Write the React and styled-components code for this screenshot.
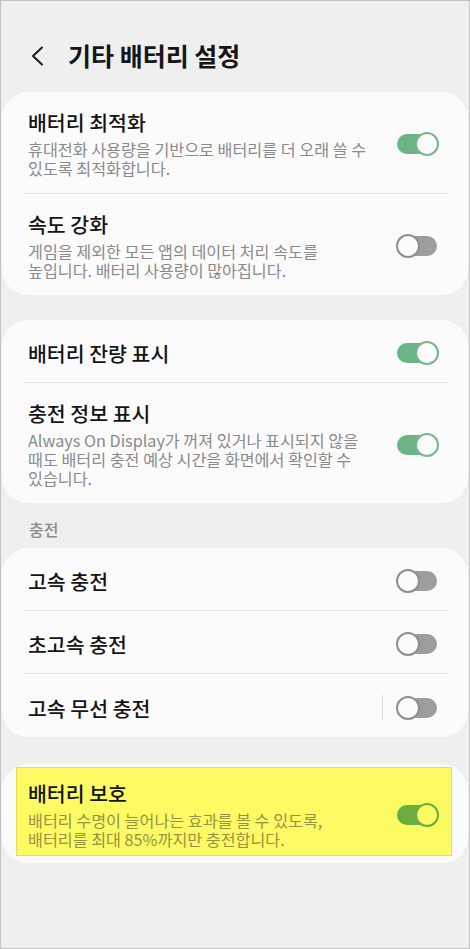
import React from "react";
import styled, { createGlobalStyle, css } from "styled-components";

const GlobalStyle = createGlobalStyle`
  html, body {
    margin: 0;
    padding: 0;
    background: #efefef;
  }
  * {
    box-sizing: border-box;
  }
`;

const sections = [
  {
    rows: [
      {
        title: "배터리 최적화",
        lines: ["휴대전화 사용량을 기반으로 배터리를 더 오래 쓸 수", "있도록 최적화합니다."],
        on: true,
      },
      {
        title: "속도 강화",
        lines: ["게임을 제외한 모든 앱의 데이터 처리 속도를", "높입니다. 배터리 사용량이 많아집니다."],
        on: false,
      },
    ],
  },
  {
    rows: [
      { title: "배터리 잔량 표시", on: true },
      {
        title: "충전 정보 표시",
        lines: [
          "Always On Display가 꺼져 있거나 표시되지 않을",
          "때도 배터리 충전 예상 시간을 화면에서 확인할 수",
          "있습니다.",
        ],
        on: true,
      },
    ],
  },
  {
    label: "충전",
    rows: [
      { title: "고속 충전", on: false },
      { title: "초고속 충전", on: false },
      { title: "고속 무선 충전", on: false, separator: true },
    ],
  },
];

const App = () => {
  return (
    <Page>
      <GlobalStyle />
      <Header>
        <BackButton>
          <svg width="15" height="20" viewBox="0 0 15 20" fill="none">
            <path d="M12 1.5 L3 10 L12 18.5" stroke="#1a1a1a" strokeWidth="2" strokeLinecap="round" strokeLinejoin="round" />
          </svg>
        </BackButton>
        <Title>기타 배터리 설정</Title>
      </Header>

      {sections.map((section, i) => (
        <React.Fragment key={i}>
          {section.label && <SectionLabel>{section.label}</SectionLabel>}
          <Card>
            {section.rows.map((row, j) => (
              <React.Fragment key={row.title}>
                {j > 0 && <Divider />}
                <SettingRow item={row} />
              </React.Fragment>
            ))}
          </Card>
        </React.Fragment>
      ))}

      <Card $spaced>
        <Highlight>
          <SettingRow
            highlight
            item={{
              title: "배터리 보호",
              lines: ["배터리 수명이 늘어나는 효과를 볼 수 있도록,", "배터리를 최대 85%까지만 충전합니다."],
              on: true,
            }}
          />
        </Highlight>
      </Card>
    </Page>
  );
};

const SettingRow = ({ item, highlight }) => {
  const { title, lines, on, separator } = item;
  return (
    <Row $sub={!!lines} $highlight={highlight}>
      <TextBlock>
        <RowTitle>{title}</RowTitle>
        {lines && (
          <RowSub $highlight={highlight}>
            {lines.map((line) => (
              <span key={line}>{line}</span>
            ))}
          </RowSub>
        )}
      </TextBlock>
      <Controls>
        {separator && <VSep />}
        <Switch $on={on} $highlight={highlight}>
          <Track />
          <Thumb />
        </Switch>
      </Controls>
    </Row>
  );
};

export default App;

const Page = styled.div`
  width: 470px;
  min-height: 949px;
  border: 1px solid #c2c2c2;
  background: #efefef;
  font-family: "Noto Sans CJK KR", "Noto Sans", sans-serif;
  padding: 0 1px 40px;
`;

const Header = styled.header`
  display: flex;
  align-items: flex-start;
  height: 91px;
  padding: 39px 0 0 28px;
  gap: 23px;
`;

const BackButton = styled.span`
  display: flex;
  align-items: center;
  width: 15px;
  height: 30px;
  padding-top: 2px;
`;

const Title = styled.h1`
  margin: 0;
  font-size: 25px;
  line-height: 30px;
  font-weight: 700;
  color: #161616;
`;

const Card = styled.section`
  background: #fbfbfb;
  border-radius: 26px;
  margin-bottom: 25px;
  ${(p) =>
    p.$spaced &&
    css`
      margin-top: 27px;
      padding: 3px 16px 7px 14px;
    `}
`;

const Divider = styled.div`
  height: 1px;
  background: #e6e6e6;
  margin: 0 20px 0 22px;
`;

const SectionLabel = styled.div`
  padding: 0 0 0 27px;
  margin: -9px 0 9px;
  font-size: 16px;
  line-height: 20px;
  font-weight: 500;
  color: #8a8a8a;
`;

const Row = styled.div`
  display: flex;
  align-items: center;
  justify-content: space-between;
  padding: ${(p) => (p.$sub ? "18px 29px 15px 26px" : "21px 29px 17px 26px")};
  ${(p) =>
    p.$highlight &&
    css`
      padding: 13px 12px 6px 11px;
    `}
`;

const TextBlock = styled.div`
  display: flex;
  flex-direction: column;
  min-width: 0;
`;

const RowTitle = styled.div`
  font-size: 20.5px;
  line-height: 24px;
  font-weight: 500;
  color: #141414;
`;

const RowSub = styled.div`
  display: flex;
  flex-direction: column;
  margin-top: 6px;
  font-size: 16.2px;
  line-height: 19px;
  color: ${(p) => (p.$highlight ? "#979344" : "#8a8a8a")};
  white-space: nowrap;
`;

const Controls = styled.div`
  display: flex;
  align-items: center;
  gap: 13px;
  flex-shrink: 0;
`;

const VSep = styled.span`
  width: 1px;
  height: 25px;
  background: #d9d9d9;
`;

const Highlight = styled.div`
  background: #fcfb64;
  border: 1px solid #e6dc55;
`;

const Track = styled.span`
  position: absolute;
  left: 1px;
  top: 2px;
  width: 40px;
  height: 20px;
  border-radius: 10px;
`;

const Thumb = styled.span`
  position: absolute;
  top: 0;
  width: 24px;
  height: 24px;
  border-radius: 50%;
  border: 2px solid;
`;

const Switch = styled.span`
  position: relative;
  display: block;
  width: 43px;
  height: 24px;

  ${Track} {
    background: ${(p) => (p.$on ? (p.$highlight ? "#6aad3d" : "#6cb385") : "#9d9d9d")};
  }

  ${Thumb} {
    left: ${(p) => (p.$on ? "19px" : "0")};
    background: ${(p) => (p.$highlight ? "#fcfb64" : "#fcfcfc")};
    border-color: ${(p) => (p.$on ? (p.$highlight ? "#6aad3d" : "#76b78c") : "#8e8e8e")};
  }
`;
